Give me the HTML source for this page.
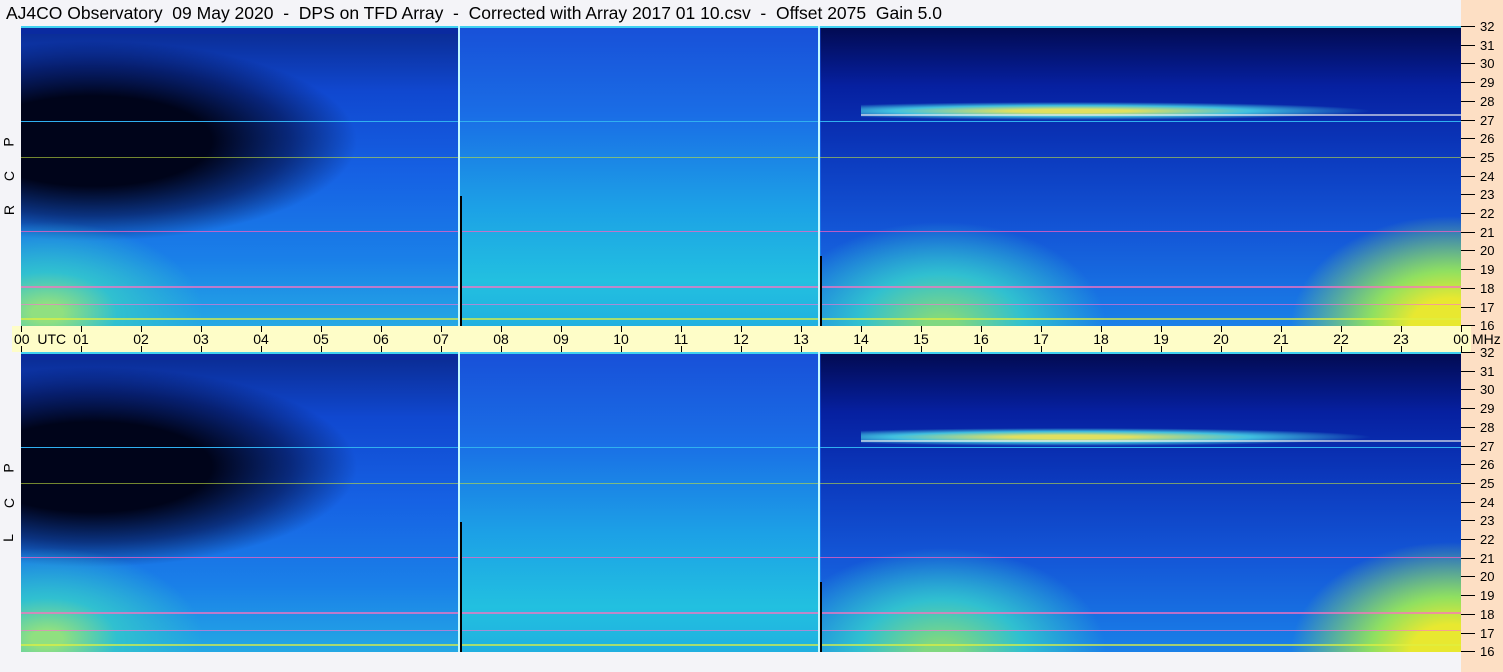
<!DOCTYPE html>
<html><head><meta charset="utf-8"><style>
*{margin:0;padding:0;box-sizing:border-box}
body{width:1503px;height:672px;background:#f4f4f8;position:relative;overflow:hidden;font-family:"Liberation Sans",sans-serif}
.title{position:absolute;left:6px;top:3px;font-size:17.5px;color:#000;white-space:pre}
.peach{position:absolute;left:1461px;top:0;width:42px;height:672px;background:#fddfc4}
.band{position:absolute;left:12px;top:326px;width:1459px;height:26px;background:#fefdc8}
.panel{position:absolute;left:21px;width:1440px;height:300px;overflow:hidden;
background:linear-gradient(to bottom,#0a2a90 0%,#1048d0 22%,#1662e4 50%,#1a80e8 78%,#24a8e4 100%)}
.panel div{position:absolute}
.tk{position:absolute;width:14px;height:1px;background:#000;left:1461px}
.tl{position:absolute;left:1480px;font-size:13px;line-height:13px}
.ut{position:absolute;top:331px;font-size:14px;transform:translateX(-50%)}
.utk{position:absolute;width:1px;height:6px;background:#000}
.lab{position:absolute;left:4px;font-size:14px;transform:rotate(-90deg)}
</style></head><body>
<div class="title">AJ4CO Observatory  09 May 2020  -  DPS on TFD Array  -  Corrected with Array 2017 01 10.csv  -  Offset 2075  Gain 5.0</div>
<div class="peach"></div>
<div class="band"></div>

<div class="panel" style="top:26px">
 <div style="left:0;top:0;width:1440px;height:8px;background:#0a2aa0"></div>
 <div style="left:0;top:15px;width:480px;height:200px;background:radial-gradient(ellipse 55% 50% at 15% 50%,#00041a 45%,rgba(2,10,60,.6) 75%,rgba(0,0,0,0) 100%)"></div>
 <div style="left:0;top:170px;width:260px;height:130px;background:radial-gradient(ellipse 60% 70% at 10% 90%,#90e080 10%,#30c0d0 45%,rgba(30,140,230,0) 100%)"></div>
 <div style="left:438px;top:0;width:360px;height:300px;background:linear-gradient(to bottom,#1850d8 0%,#1a6ee6 30%,#1ca0e6 60%,#22c0e0 85%,#20b0e0 100%)"></div>
 <div style="left:800px;top:0;width:640px;height:300px;background:linear-gradient(to bottom,#020a50 0%,#0620a0 20%,#0c3cc0 45%,#1458d8 70%,#1a80e8 100%)"></div>
 <div style="left:800px;top:170px;width:300px;height:130px;background:radial-gradient(ellipse 55% 80% at 40% 100%,#80d880 10%,#30c0d0 50%,rgba(30,120,230,0) 100%)"></div>
 <div style="left:1240px;top:190px;width:200px;height:110px;background:radial-gradient(ellipse 80% 100% at 95% 100%,#e8e830 25%,#90e060 50%,rgba(30,120,230,0) 100%)"></div>
 <div style="left:840px;top:76px;width:600px;height:18px;background:radial-gradient(ellipse 50% 50% at 35% 50%,#e0e060 20%,#40c0e0 60%,rgba(30,100,230,0) 100%)"></div>
 <div style="left:840px;top:88px;width:600px;height:2px;background:#f0f0f0;opacity:.6"></div>
 <div style="left:0;top:95px;width:1440px;height:1px;background:#30b0f0"></div>
 <div style="left:0;top:131px;width:1440px;height:1px;background:#c0e040;opacity:.6"></div>
 <div style="left:0;top:205px;width:1440px;height:1px;background:#ff60c0;opacity:.7"></div>
 <div style="left:0;top:260px;width:1440px;height:2px;background:#ff70c0;opacity:.7"></div>
 <div style="left:0;top:278px;width:1440px;height:1px;background:#ff70d0;opacity:.6"></div>
 <div style="left:0;top:292px;width:1440px;height:2px;background:#e0f040;opacity:.7"></div>
 <div style="left:0;top:0;width:1440px;height:2px;background:#40d0f0"></div>
 <div style="left:437px;top:0;width:2px;height:300px;background:#c0f8ff"></div>
 <div style="left:439px;top:170px;width:2px;height:130px;background:#000"></div>
 <div style="left:797px;top:0;width:2px;height:300px;background:#c0f8ff"></div>
 <div style="left:799px;top:230px;width:2px;height:70px;background:#000"></div>
</div>

<div class="panel" style="top:352px">
 <div style="left:0;top:0;width:1440px;height:8px;background:#0a2aa0"></div>
 <div style="left:0;top:15px;width:480px;height:200px;background:radial-gradient(ellipse 55% 50% at 15% 50%,#00041a 45%,rgba(2,10,60,.6) 75%,rgba(0,0,0,0) 100%)"></div>
 <div style="left:0;top:170px;width:260px;height:130px;background:radial-gradient(ellipse 60% 70% at 10% 90%,#90e080 10%,#30c0d0 45%,rgba(30,140,230,0) 100%)"></div>
 <div style="left:438px;top:0;width:360px;height:300px;background:linear-gradient(to bottom,#1850d8 0%,#1a6ee6 30%,#1ca0e6 60%,#22c0e0 85%,#20b0e0 100%)"></div>
 <div style="left:800px;top:0;width:640px;height:300px;background:linear-gradient(to bottom,#020a50 0%,#0620a0 20%,#0c3cc0 45%,#1458d8 70%,#1a80e8 100%)"></div>
 <div style="left:800px;top:170px;width:300px;height:130px;background:radial-gradient(ellipse 55% 80% at 40% 100%,#80d880 10%,#30c0d0 50%,rgba(30,120,230,0) 100%)"></div>
 <div style="left:1240px;top:190px;width:200px;height:110px;background:radial-gradient(ellipse 80% 100% at 95% 100%,#e8e830 25%,#90e060 50%,rgba(30,120,230,0) 100%)"></div>
 <div style="left:840px;top:76px;width:600px;height:18px;background:radial-gradient(ellipse 50% 50% at 35% 50%,#e0e060 20%,#40c0e0 60%,rgba(30,100,230,0) 100%)"></div>
 <div style="left:840px;top:88px;width:600px;height:2px;background:#f0f0f0;opacity:.6"></div>
 <div style="left:0;top:95px;width:1440px;height:1px;background:#30b0f0"></div>
 <div style="left:0;top:131px;width:1440px;height:1px;background:#c0e040;opacity:.6"></div>
 <div style="left:0;top:205px;width:1440px;height:1px;background:#ff60c0;opacity:.7"></div>
 <div style="left:0;top:260px;width:1440px;height:2px;background:#ff70c0;opacity:.7"></div>
 <div style="left:0;top:278px;width:1440px;height:1px;background:#ff70d0;opacity:.6"></div>
 <div style="left:0;top:292px;width:1440px;height:2px;background:#e0f040;opacity:.7"></div>
 <div style="left:0;top:0;width:1440px;height:2px;background:#40d0f0"></div>
 <div style="left:437px;top:0;width:2px;height:300px;background:#c0f8ff"></div>
 <div style="left:439px;top:170px;width:2px;height:130px;background:#000"></div>
 <div style="left:797px;top:0;width:2px;height:300px;background:#c0f8ff"></div>
 <div style="left:799px;top:230px;width:2px;height:70px;background:#000"></div>
</div>

<div class="lab" style="top:202px">R</div>
<div class="lab" style="top:168px">C</div>
<div class="lab" style="top:134px">P</div>
<div class="lab" style="top:530px">L</div>
<div class="lab" style="top:495px">C</div>
<div class="lab" style="top:460px">P</div>

<div id="ax"></div>
<script>
var h='';
for(var p=0;p<2;p++){var y0=p?352:26;
for(var f=32;f>=16;f--){var y=Math.round(y0+(32-f)*18.7);
h+='<div class="tk" style="top:'+y+'px"></div><div class="tl" style="top:'+(y-6)+'px">'+f+'</div>';}}
for(var i=0;i<=24;i++){var x=21+60*i;var t=(i%24<10?'0':'')+(i%24);
h+='<div class="utk" style="left:'+x+'px;top:326px"></div><div class="utk" style="left:'+x+'px;top:346px"></div>';
var s=t; if(i==0)s='';h+='<div class="ut" style="left:'+x+'px">'+s+'</div>';}
h+='<div style="position:absolute;left:14px;top:331px;font-size:14px">00&nbsp;&nbsp;UTC</div>';
h+='<div style="position:absolute;left:1472px;top:331px;font-size:14px">MHz</div>';
document.getElementById('ax').innerHTML=h;
</script>
</body></html>
